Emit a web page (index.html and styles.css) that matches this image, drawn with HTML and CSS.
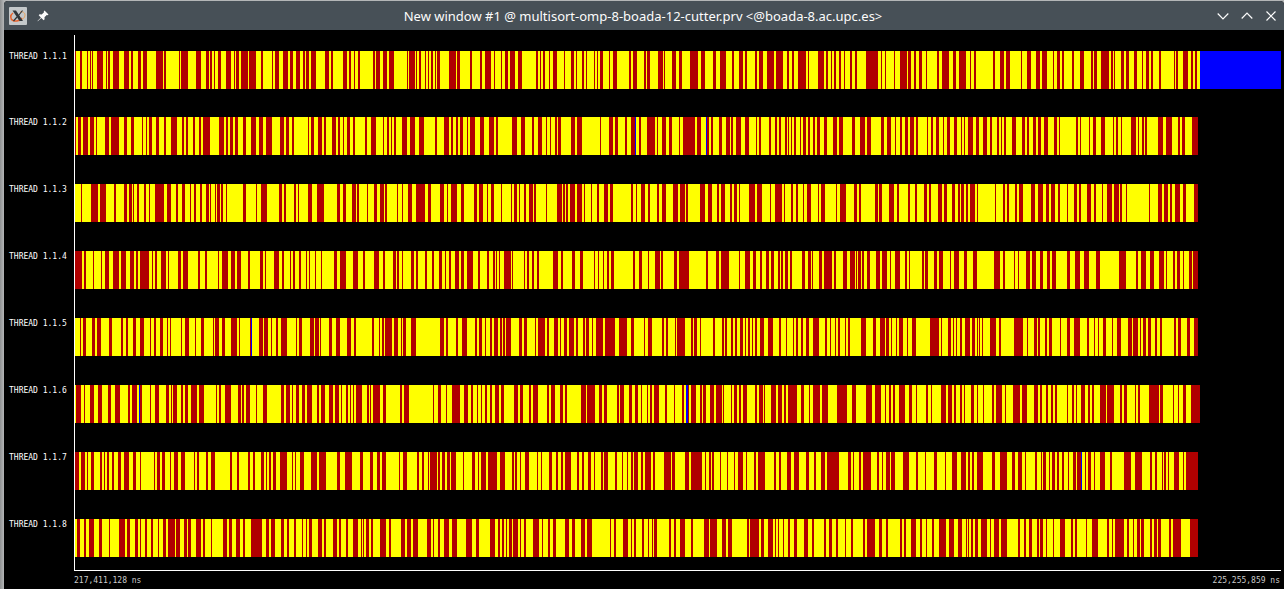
FILE: index.html
```html
<!DOCTYPE html>
<html lang="en">
<head>
<meta charset="utf-8">
<title>New window #1 @ multisort-omp-8-boada-12-cutter.prv</title>
<link rel="stylesheet" href="styles.css">
</head>
<body>
<div class="window">
  <header class="titlebar">
    <div class="titlebar-side">
      <button class="tool app-menu" type="button" aria-label="Window menu">
        <svg viewBox="0 0 18 18" width="18" height="18" aria-hidden="true">
          <rect width="18" height="18" rx="1" fill="#c4c8ca"/>
          <path d="M4 6C1 8 1 12 4 13.500C7 15 11 13.500 13 11" fill="none" stroke="#e8622c" stroke-width="1.500"/>
          <path d="M11 5C15 4 17 7 15.500 10C14.500 12 12 13.500 10 14" fill="none" stroke="#e9a35c" stroke-width="1"/>
          <path d="M3.500 3.500H7L14 14H10.500Z" fill="#30363a"/>
          <path d="M13.500 3.500L9.500 8.500M8 10L4.500 14" stroke="#30363a" stroke-width="1.200"/>
        </svg>
      </button>
      <button class="tool pin" type="button" aria-label="Keep on all desktops">
        <svg viewBox="0 0 12 12" width="12" height="12" aria-hidden="true">
          <path d="M7.500 0.500L11.500 4.500L10.500 5.200L9.700 5L7.500 7.300L7.600 9.300L6.700 10.200L4.300 7.900L0.800 11.300L0.500 11L3.900 7.500L1.700 5.200L2.600 4.300L4.700 4.400L7 2.200L6.800 1.300Z" fill="#fcfcfc"/>
        </svg>
      </button>
    </div>
    <h1 class="title">New window #1 @ multisort-omp-8-boada-12-cutter.prv &lt;@boada-8.ac.upc.es&gt;</h1>
    <div class="titlebar-side controls">
      <button class="tool" type="button" aria-label="Minimize">
        <svg viewBox="0 0 12 12" width="12" height="12" aria-hidden="true"><path class="stroke" d="M0.700 3.500L6 8.800L11.300 3.500"/></svg>
      </button>
      <button class="tool" type="button" aria-label="Maximize">
        <svg viewBox="0 0 12 12" width="12" height="12" aria-hidden="true"><path class="stroke" d="M0.700 8.500L6 3.200L11.300 8.500"/></svg>
      </button>
      <button class="tool" type="button" aria-label="Close">
        <svg viewBox="0 0 12 12" width="12" height="12" aria-hidden="true"><path class="stroke" d="M1.500 1.500L10.500 10.500M10.500 1.500L1.500 10.500"/></svg>
      </button>
    </div>
  </header>
  <main class="timeline">
    <div class="rows" id="rows"></div>
    <footer class="scale">
      <span>217,411,128 ns</span>
      <span>225,255,859 ns</span>
    </footer>
  </main>
</div>
<script src="timeline.js"></script>
</body>
</html>
```
FILE: styles.css
```css
* {
  box-sizing: border-box;
}

body {
  margin: 0;
  min-height: 100vh;
  display: flex;
  padding: 1px 0 0 4px;
  background: linear-gradient(to right, #8f9192, #b4b6b7 4px);
  overflow: hidden;
}

.window {
  flex: 1;
  min-width: 0;
  display: flex;
  flex-direction: column;
  border-radius: 4px 4px 0 0;
  overflow: hidden;
  background: #000;
}

.titlebar {
  display: grid;
  grid-template-columns: 1fr auto 1fr;
  align-items: center;
  height: 29px;
  padding: 0 7px 0 5px;
  background: #475057;
  color: #fcfcfc;
}

.titlebar-side {
  display: flex;
  align-items: center;
  gap: 10px;
}

.controls {
  justify-content: flex-end;
  gap: 12px;
}

.title {
  margin: 0;
  font: 400 13px/20px "Noto Sans", sans-serif;
  white-space: nowrap;
}

.tool {
  display: flex;
  padding: 0;
  border: 0;
  background: none;
}

.stroke {
  fill: none;
  stroke: #fcfcfc;
  stroke-width: 1.2;
}

.timeline {
  flex: 1;
  display: flex;
  flex-direction: column;
  padding: 5px 3px 0 0;
  color: #fff;
  font: 8px/10px "DejaVu Sans Mono", monospace;
}

.rows {
  flex: 1;
  display: flex;
  flex-direction: column;
}

.row {
  flex: 1 1 67px;
  display: grid;
  grid-template-columns: 70px 1fr;
}

.row:first-child {
  flex-basis: 66px;
}

.label {
  padding: 17px 0 0 5px;
  white-space: nowrap;
}

.lane {
  padding-top: 16px;
  border-left: 1px solid #fff;
}

.bar {
  display: block;
  width: 100%;
  height: 38px;
  shape-rendering: crispEdges;
}

.running {
  fill: #ff0;
}

.sync {
  fill: #b00000;
}

.idle {
  fill: #00f;
}

.scale {
  display: flex;
  justify-content: space-between;
  margin-left: 70px;
  padding: 5px 1px 3px 0;
  border-top: 1px solid #fff;
  color: #ccc;
}
```
FILE: timeline.js
```js
// Each trace is split in four blocks of 285 samples; runs are "start:length".
const SPAN = 1206;
const BLOCK = 285;
const LEAD = 5;

const threads = [
  { name: "THREAD 1.1.1", end: 1125, idle: "1125:81", sync: [
    "5:1 10:2 17:1 20:1 22:1 27:6 36:1 38:2 43:6 54:5 61:2 68:3 73:4 86:7 94:2 109:1 111:7 126:5 136:3 140:2 144:1 148:3 156:5 164:1 166:3 171:7 179:7 191:2 202:1 205:4 213:5 220:3 226:4 233:2 236:3 241:5 255:4 261:2 273:4 279:2 284:1",
    "3:2 18:2 21:4 28:4 34:5 52:1 54:6 61:1 64:2 70:1 73:1 76:2 80:1 82:3 94:7 102:3 115:2 125:2 130:6 139:1 146:1 150:3 155:5 163:4 181:2 185:1 188:2 194:1 198:4 209:1 216:3 221:1 227:2 231:1 239:1 242:1 245:3 254:1 258:4 274:2 278:4",
    "4:2 7:3 18:5 24:1 32:4 39:3 50:8 61:4 73:3 80:6 92:2 99:4 105:2 115:2 119:4 127:7 136:7 147:2 152:2 158:8 168:1 178:6 186:2 191:1 194:2 199:2 204:1 210:2 215:2 226:12 241:1 245:1 254:1 260:7 268:3 274:2 279:3",
    "1:1 12:2 17:7 28:3 34:7 45:1 49:2 68:2 75:4 81:4 96:1 102:4 111:4 117:5 128:1 132:3 137:2 147:2 155:4 166:2 169:3 176:8 186:2 189:1 196:3 201:3 209:3 217:1 221:3 226:2 234:2 249:1 251:2 258:5 266:2 270:2"] },
  { name: "THREAD 1.1.2", end: 1123, idle: "560:1 631:1", sync: [
    "5:1 8:3 13:5 20:4 26:1 35:4 41:8 54:3 61:3 72:1 76:1 79:3 86:3 94:2 101:6 112:2 116:2 123:2 129:2 133:7 149:5 156:2 160:3 165:3 173:3 181:5 189:4 196:6 210:4 216:3 222:2 238:1 241:3 248:4 254:2 262:4 268:2 273:1 277:3 283:2",
    "10:2 16:5 28:1 32:2 36:1 39:2 47:5 55:5 64:5 80:2 89:5 96:2 101:2 105:3 112:1 115:5 125:4 134:5 141:2 157:5 166:4 177:2 183:4 191:1 195:1 200:2 203:3 216:4 222:5 245:1 254:4 260:3 270:2 276:4 284:1",
    "0:1 7:8 17:1 22:4 29:3 39:1 43:12 57:4 67:2 71:2 79:3 86:4 91:2 96:5 105:4 116:1 119:2 129:2 135:2 139:2 145:2 148:1 151:1 154:2 160:1 163:3 168:2 173:2 177:3 184:3 193:4 199:4 212:3 220:5 227:4 241:3 247:4 255:1 260:2 265:3 270:4 276:2",
    "2:1 6:2 11:3 18:1 22:3 29:3 36:1 39:1 43:5 51:3 58:4 65:2 72:2 76:1 79:2 87:4 97:3 102:2 108:3 113:3 119:4 129:3 134:1 151:2 155:1 164:1 168:3 176:4 188:1 191:2 196:1 206:5 213:1 217:2 220:2 233:5 241:6 253:2 257:3 267:6"] },
  { name: "THREAD 1.1.3", end: 1123, idle: "", sync: [
    "11:1 21:7 30:6 44:2 54:3 59:3 63:1 67:2 74:2 79:1 85:9 97:4 106:2 112:3 120:1 124:2 130:2 136:3 140:1 145:1 147:3 151:2 156:1 173:3 186:1 191:6 209:3 214:2 224:2 228:1 238:4 247:7 267:3 273:3 282:3",
    "0:1 2:2 12:1 19:3 25:4 30:2 42:1 47:1 53:4 61:9 73:3 85:4 92:1 96:6 106:3 119:3 124:4 132:1 136:3 146:1 156:1 159:3 164:1 169:2 174:4 179:2 191:1 202:5 208:2 211:2 215:5 222:5 229:1 236:1 242:2 249:4 255:3 276:2 281:1",
    "1:4 8:2 17:2 22:4 33:5 40:5 46:2 60:5 68:4 77:2 81:4 90:2 94:3 99:1 109:6 117:5 130:1 135:7 144:1 151:2 156:2 163:1 167:4 178:1 181:4 196:1 200:6 214:3 219:2 235:3 239:3 249:5 257:2 268:2 275:2 284:1",
    "0:2 4:2 13:4 19:3 27:3 33:2 36:3 41:2 45:5 52:1 70:1 78:2 82:2 90:2 94:4 106:4 113:5 121:3 126:4 133:2 142:1 149:3 154:2 162:4 169:2 177:1 182:5 189:5 195:2 201:1 224:1 233:4 239:4 245:2 250:5 258:3 269:4"] },
  { name: "THREAD 1.1.4", end: 1123, idle: "", sync: [
    "5:7 14:2 23:1 31:1 35:4 43:6 51:5 60:4 66:2 70:9 82:1 85:2 91:5 98:1 108:3 113:5 128:2 135:2 148:1 152:6 161:4 167:4 178:2 190:3 195:1 204:5 212:2 220:1 223:2 229:2 236:1 239:1 245:1 251:1 264:3 270:6 283:2",
    "0:3 8:2 19:5 28:2 38:3 42:2 47:1 56:3 61:2 70:2 77:2 84:3 90:1 94:2 100:4 106:3 112:6 123:2 132:2 138:2 141:1 144:1 149:7 157:1 169:1 172:2 177:2 182:2 198:5 206:2 217:3 225:3 239:1 243:1 248:1 252:2 256:3 278:2 284:1",
    "0:2 8:1 15:5 21:2 34:3 39:10 66:2 76:3 81:8 99:1 105:5 113:3 120:2 126:3 131:3 138:2 141:2 145:3 150:2 162:3 168:3 172:1 179:3 184:8 194:2 203:4 210:5 216:1 218:3 222:2 227:3 236:4 242:5 250:1 255:5 265:2 269:1 282:2",
    "0:3 9:3 14:4 25:1 29:5 39:3 48:4 69:6 78:2 89:1 93:1 101:4 107:4 115:3 122:3 127:4 142:3 150:5 159:5 171:4 194:7 211:2 216:5 225:4 234:5 241:1 248:2 252:3 258:1 264:3 268:5"] },
  { name: "THREAD 1.1.5", end: 1123, idle: "176:1", sync: [
    "10:1 13:3 22:3 27:4 39:3 51:2 56:2 63:3 70:4 80:1 84:2 90:3 97:1 100:1 111:1 115:4 125:1 131:3 143:1 145:4 152:3 161:6 169:1 180:1 189:4 194:4 201:1 206:2 211:6 226:1 229:3 240:4 245:4 250:1 259:3 266:4 277:4 284:1",
    "0:1 17:2 24:1 27:2 30:7 39:4 46:1 48:3 56:5 85:4 91:2 101:2 107:5 120:2 124:3 130:1 135:2 139:4 145:2 148:2 151:5 164:3 169:3 180:1 183:7 192:2 199:4 205:1 209:3 214:5 221:2 228:2 231:3 237:1 241:7 250:10 264:8 276:3",
    "4:1 8:4 22:2 26:2 35:1 37:8 51:2 54:3 60:1 73:2 82:2 85:2 91:2 95:2 100:3 105:1 108:2 112:1 115:2 120:4 128:5 139:2 146:1 153:1 156:2 161:2 166:3 173:6 185:2 190:1 195:1 198:2 205:1 208:2 221:5 233:3 240:5 246:3 251:1 256:1 259:4 267:1 272:4",
    "5:9 16:1 23:3 28:1 31:1 35:2 40:5 47:3 52:1 54:1 57:1 65:6 74:2 89:9 102:1 109:3 113:2 120:2 124:3 135:1 142:3 149:6 162:2 169:1 173:1 178:3 187:1 192:4 203:4 208:5 215:1 218:3 223:3 230:2 235:2 249:2 253:3 262:3 269:4"] },
  { name: "THREAD 1.1.6", end: 1125, idle: "64:1 611:2", sync: [
    "6:5 14:1 20:4 28:4 38:3 45:5 58:2 62:5 70:2 80:1 85:4 96:3 101:1 103:4 111:2 115:3 121:6 129:5 146:1 149:2 155:6 168:3 172:2 176:4 186:1 193:4 211:3 216:4 222:1 226:3 232:3 237:5 247:2 251:4 259:4 265:4 271:1 276:2 280:1 283:1",
    "1:6 12:2 15:1 18:7 28:3 45:2 49:5 78:1 83:3 91:1 97:8 109:4 116:2 122:1 126:1 130:2 135:2 140:4 146:3 159:4 165:3 174:2 178:5 192:2 196:4 205:3 210:2 226:5 232:8 244:3 249:3 262:2 265:4 274:3 280:3",
    "1:1 7:1 10:2 14:5 25:2 34:1 42:2 48:1 51:5 60:2 63:3 70:4 76:6 83:1 91:1 94:3 99:2 103:4 115:2 119:4 124:1 131:5 138:4 144:2 148:9 161:3 169:1 173:7 182:6 197:10 212:4 226:6 235:6 245:1 249:2 253:2 259:6 269:3 276:1",
    "1:2 6:1 16:5 23:4 29:2 35:2 39:1 46:3 52:1 58:1 67:2 71:6 80:1 88:7 97:5 109:4 115:2 121:2 126:2 130:2 142:1 147:2 151:1 156:4 163:2 167:2 175:6 182:7 195:2 199:3 210:1 213:2 224:10 235:3 248:1 253:1 258:3 266:9"] },
  { name: "THREAD 1.1.7", end: 1123, idle: "1006:1", sync: [
    "5:4 11:4 17:1 21:3 30:2 34:1 37:2 42:2 48:3 54:5 63:3 70:1 84:1 87:3 92:3 100:1 104:4 111:4 124:1 127:2 136:2 141:4 160:2 167:2 178:2 183:2 191:3 196:1 199:2 203:3 210:7 222:1 225:1 230:4 241:6 249:7 267:3 275:7",
    "5:3 15:3 22:3 27:4 44:1 48:4 62:2 67:2 73:1 75:7 83:2 87:3 92:3 96:5 108:1 117:3 123:1 126:5 133:9 145:5 157:2 160:2 165:1 170:4 182:1 186:1 194:3 201:2 206:2 210:6 222:2 227:2 233:3 239:1 246:2 249:4 260:2 267:1 272:1 276:2 279:4",
    "1:2 5:6 13:2 24:7 32:3 45:4 51:11 65:1 69:2 72:2 80:1 87:1 94:1 98:5 106:1 114:2 118:7 134:2 139:2 147:4 154:5 166:3 174:2 181:4 187:12 208:3 213:1 219:2 223:8 237:2 242:1 246:4 251:4 263:6 276:2",
    "0:1 9:3 20:1 27:5 36:5 43:2 47:2 52:6 67:3 75:7 87:3 93:4 100:1 110:2 116:1 118:3 124:1 127:3 132:2 137:2 143:1 148:3 152:4 160:1 163:3 169:1 175:5 185:2 199:7 210:7 225:2 230:2 237:1 239:2 243:1 249:5 258:1 261:12"] },
  { name: "THREAD 1.1.8", end: 1123, idle: "", sync: [
    "7:3 14:2 19:5 29:3 39:1 49:6 57:3 65:3 70:1 75:2 81:2 88:1 93:3 98:7 106:4 114:3 118:3 126:5 133:2 141:1 153:4 159:3 166:4 173:2 181:11 196:3 201:4 211:3 217:2 224:2 232:1 236:1 239:3 248:4 254:2 263:4 269:2 276:2 283:2",
    "0:3 6:1 8:1 11:3 16:2 25:6 34:2 46:4 52:4 58:5 72:4 78:1 83:2 89:5 97:5 111:6 121:3 135:5 143:2 147:2 151:1 154:3 158:5 165:1 169:2 178:6 187:1 193:2 198:3 210:4 217:3 226:4 232:5 255:1 259:2 268:5 276:1 279:2",
    "2:2 8:1 12:1 14:3 29:2 34:2 40:5 51:2 64:5 70:7 82:4 88:4 107:2 110:9 121:3 128:5 135:1 138:1 143:1 148:2 154:3 164:4 172:2 184:2 189:3 196:2 205:1 211:2 223:2 227:8 239:3 246:2 260:2 264:2 271:5 280:2",
    "1:1 7:2 14:7 24:5 33:4 41:1 43:1 46:2 50:3 56:6 65:1 69:5 76:6 93:2 99:2 104:3 112:2 115:3 121:1 128:1 135:5 146:2 150:2 161:1 167:6 182:2 187:1 190:9 202:2 208:1 212:3 216:3 225:2 229:3 233:3 244:2 248:8 265:8"] }
];

function runsToPath(runs, offset) {
  return runs.split(" ").filter(Boolean).map((run) => {
    const [start, length] = run.split(":").map(Number);
    return `M${start + offset} 0h${length}v1h-${length}z`;
  }).join("");
}

document.getElementById("rows").innerHTML = threads.map((thread) => {
  const sync = thread.sync.map((runs, i) => runsToPath(runs, i * BLOCK - LEAD)).join("");
  return `<div class="row">
    <div class="label">${thread.name}</div>
    <div class="lane">
      <svg class="bar" viewBox="0 0 ${SPAN} 1" preserveAspectRatio="none" role="img" aria-label="${thread.name} states">
        <rect class="running" width="${thread.end}" height="1"/>
        <path class="sync" d="${sync}"/>
        <path class="idle" d="${runsToPath(thread.idle, 0)}"/>
      </svg>
    </div>
  </div>`;
}).join("");
```
